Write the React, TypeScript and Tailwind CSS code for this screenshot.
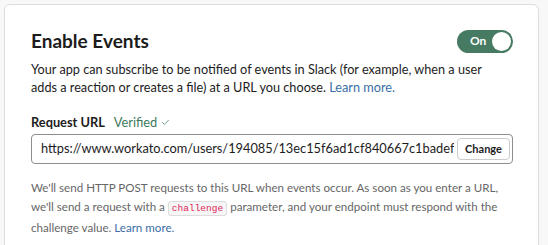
import { Check } from 'lucide-react';

export default function App() {
  return (
    <div className="h-[245px] w-[548px] overflow-hidden bg-[#f8f8f8] pl-[4px] pr-[9px] pt-[4px] font-['Lato','Noto_Sans',sans-serif] text-[#1d1c1d]">
      <div className="h-[260px] rounded-[6px] border border-[#dddddd] bg-white pl-[26px] pr-[25px] pt-[24px]">
        <div className="flex items-center justify-between">
          <h2 className="text-[19px] font-bold leading-[24px]">Enable Events</h2>
          <button className="flex h-[23px] w-[56px] items-center justify-between rounded-full bg-[#467a62] pl-[13px] pr-[2px]">
            <span className="text-[12px] font-bold leading-none text-white">On</span>
            <span className="h-[19px] w-[19px] rounded-full bg-white" />
          </button>
        </div>
        <p className="mt-[7px] text-[12.7px] leading-[18px]">
          Your app can subscribe to be notified of events in Slack (for example, when a user
          <br />
          adds a reaction or creates a file) at a URL you choose. <a className="text-[#3a6ea5]">Learn more.</a>
        </p>
        <div className="mt-[17px] flex items-center gap-[9px] text-[12.8px] leading-[18px]">
          <span className="font-bold">Request URL</span>
          <span className="flex items-center gap-[4px] text-[#3d7a5e]">
            Verified <Check className="h-[9px] w-[9px]" strokeWidth={2} />
          </span>
        </div>
        <div className="mt-[3px] flex h-[30px] items-center justify-between rounded-[4px] border border-[#8d8d8d] pl-[9px] pr-[2px]">
          <span className="min-w-0 truncate text-[12.8px]">https://www.workato.com/users/194085/13ec15f6ad1cf840667c1badef</span>
          <button className="flex h-[22px] w-[53px] shrink-0 items-center justify-center rounded-[4px] border border-[#cccccc] text-[11px] font-bold">
            Change
          </button>
        </div>
        <p className="mt-[14px] text-[11.6px] leading-[19px] text-[#666666]">
          We'll send HTTP POST requests to this URL when events occur. As soon as you enter a URL,
          <br />
          we'll send a request with a{' '}
          <code className="rounded-[3px] border border-[#dddddd] bg-[#f6f6f6] px-[3px] py-[1px] font-['Liberation_Mono',monospace] text-[9.5px] text-[#e01e5a]">challenge</code>{' '}
          parameter, and your endpoint must respond with the
          <br />
          challenge value. <a className="text-[#3a6ea5]">Learn more.</a>
        </p>
      </div>
    </div>
  );
}
